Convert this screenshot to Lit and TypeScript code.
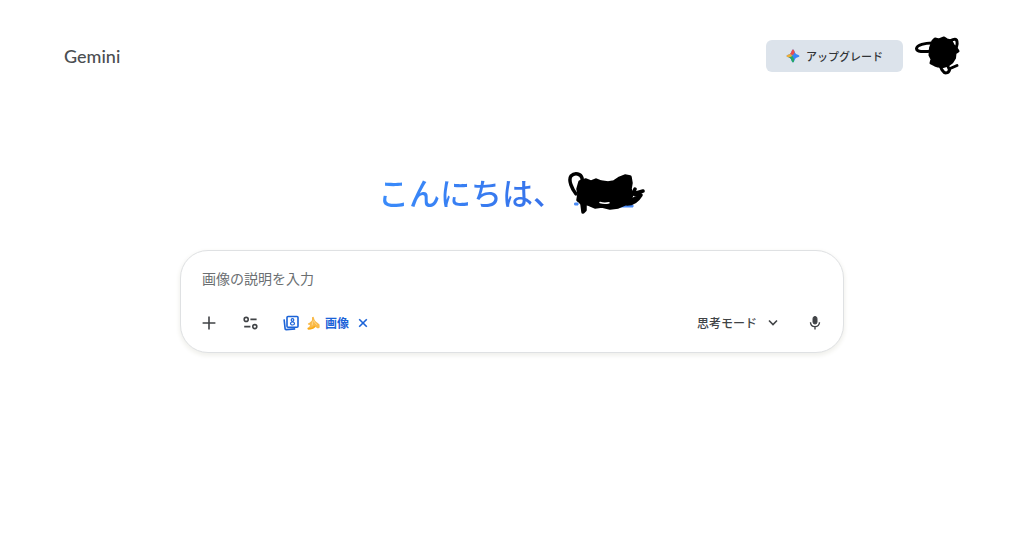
import { LitElement, html, css } from "lit";
import { customElement, state } from "lit/decorators.js";

@customElement("app-header")
class AppHeader extends LitElement {
  static styles = css`
    :host { display: block; }
    header {
      display: flex;
      align-items: center;
      justify-content: space-between;
      padding: 32px 62px 0 64px;
      height: 48px;
    }
    .brand {
      font: 500 18px/24px "Lato", "Open Sans", sans-serif;
      color: #4b4e51;
      text-decoration: none;
    }
    .actions { display: flex; align-items: center; gap: 11px; }
    button { font: inherit; border: 0; cursor: pointer; }
    .upgrade {
      display: flex;
      align-items: center;
      gap: 6px;
      height: 32px;
      padding: 0 20px;
      border-radius: 6px;
      background: #dce3eb;
      color: #303336;
      font-size: 11px;
      font-weight: 500;
      line-height: 16px;
      white-space: nowrap;
    }
    .avatar { display: block; padding: 0; background: none; }
    svg { display: block; }
  `;

  render() {
    return html`
      <header>
        <a class="brand" href="#">Gemini</a>
        <div class="actions">
          <button class="upgrade" type="button">
            <svg width="14" height="14" viewBox="0 0 14 14" aria-hidden="true">
              <defs>
                <clipPath id="spark"><path d="M7 .5C8 .5 8.300 2.500 9.400 4.200 10.500 5.600 13.500 6 13.500 7S10.500 8.400 9.400 9.600C8.300 11.500 8 13.500 7 13.500S5.700 11.500 4.600 9.600C3.500 8.400.5 8 .5 7S3.500 5.600 4.600 4.200C5.700 2.500 6 .5 7 .5Z"/></clipPath>
                <filter id="soft"><feGaussianBlur stdDeviation=".7"/></filter>
              </defs>
              <g clip-path="url(#spark)">
                <rect width="14" height="14" fill="#3b86f5"/>
                <g filter="url(#soft)">
                  <path d="M4-1h5.500l-.5 4-2 3-4-1Z" fill="#ee4d4a"/>
                  <path d="M-1 4l5 .5 2.500 2.500-2 2-5.500 1Z" fill="#f0ae35"/>
                  <path d="M3 8.500l3.500-1.500 1.500 3v5H3Z" fill="#26a865"/>
                </g>
              </g>
            </svg>
            アップグレード
          </button>
          <button class="avatar" type="button" aria-label="アカウント">
            <svg width="48" height="42" viewBox="0 0 48 42" fill="none" stroke="#000" stroke-width="3" stroke-linecap="round" stroke-linejoin="round">
              <path d="M19 6l2-2 4 1 5-2 3 2 4 1 2 4 3 3 2 3-3 2-.5 5-2.500 4-4 3-5 1.500-5-.5-3-1-4-2 1-4-2-4 .5-7Z" fill="#000"/>
              <path d="M18 8C11 8 3 10 2.500 13.500 2.500 17 9 17 18 16M35 7c2-2 6-3.500 7.500-2 1 2 .5 6-1 9M25 30c2 1 1.500 3 3.500 5.500 2 3.500 6 3 7-.5l-1.500-3.500M35 34l8-3.500"/>
            </svg>
          </button>
        </div>
      </header>
    `;
  }
}

@customElement("prompt-box")
class PromptBox extends LitElement {
  @state() imageMode = true;

  static styles = css`
    :host { display: block; }
    form {
      box-sizing: border-box;
      display: flex;
      flex-direction: column;
      gap: 21px;
      padding: 17px 21px 15px;
      border: 1px solid #dfe1e3;
      border-radius: 28px;
      background: #fff;
      box-shadow: 0 2px 4px 1px #f1f1ed;
    }
    input {
      width: 100%;
      height: 20px;
      padding: 0;
      border: 0;
      outline: 0;
      background: none;
      font: inherit;
      font-size: 14px;
      line-height: 20px;
      color: #303336;
    }
    input::placeholder { color: #6b6f72; opacity: 1; }
    .tools { display: flex; align-items: center; height: 28px; color: #404346; }
    button {
      display: flex;
      align-items: center;
      padding: 0;
      border: 0;
      background: none;
      color: inherit;
      font: inherit;
      cursor: pointer;
    }
    svg { display: block; flex: none; }
    .settings { margin-left: 27px; }
    .chip {
      display: flex;
      align-items: center;
      gap: 8px;
      margin-left: 25px;
      color: #1b63d8;
      font-size: 12px;
      font-weight: 700;
      line-height: 20px;
    }
    .label { display: flex; align-items: center; gap: 5px; }
    .mode {
      position: relative;
      display: flex;
      align-items: center;
      margin-left: auto;
    }
    select {
      appearance: none;
      width: 82px;
      padding: 0;
      border: 0;
      outline: 0;
      background: none;
      color: inherit;
      font: inherit;
      font-size: 12px;
      font-weight: 500;
      line-height: 20px;
      cursor: pointer;
    }
    .arrow { position: absolute; right: 0; pointer-events: none; }
    .mic { margin-left: 29px; }
  `;

  render() {
    return html`
      <form @submit=${(e: Event) => e.preventDefault()}>
        <input type="text" aria-label="画像の説明" placeholder="画像の説明を入力" />
        <div class="tools">
          <button type="button" aria-label="追加">
            <svg width="14" height="14" viewBox="0 0 14 14" stroke="currentColor" stroke-width="1.6"><path d="M7 .6v12.800M.6 7h12.800"/></svg>
          </button>
          <button class="settings" type="button" aria-label="ツール">
            <svg width="15" height="14" viewBox="0 0 15 14" fill="none" stroke="currentColor" stroke-width="1.6">
              <circle cx="3.2" cy="3.4" r="2"/><path d="M7.4 3.4h6.200M1.200 10.600h6.200"/><circle cx="11.800" cy="10.600" r="2"/>
            </svg>
          </button>
          ${this.imageMode
            ? html`<div class="chip">
                <svg width="16" height="16" viewBox="0 0 16 16" fill="none" stroke="currentColor" stroke-width="1.6">
                  <rect x="4" y="1.500" width="11" height="10.800" rx="1"/>
                  <path d="M1.100 4.300l1 9.400q.1 1 1.100.9l9-.7"/>
                  <circle cx="9.500" cy="5" r="1.300" stroke-width="1.200"/>
                  <ellipse cx="9.500" cy="8.500" rx="2" ry="1.500" stroke-width="1.200"/>
                </svg>
                <span class="label">
                  <svg width="13" height="14" viewBox="0 0 13 14" aria-hidden="true">
                    <path d="M5 1.200 6.600.7l1 3.300c.8 1.300 2.400 2.300 4.900 4.500l.2 3-1.700.9-2.700-1.400c-1 1.900-3.600 2.500-6.800 2.400-1.200 0-1.500-1-.8-1.600C2 11.300 2.800 10.400 3 9L1 8.600.9 7.500C2.800 6.700 4 5.500 5 4.200Z" fill="#f9ba4a"/>
                    <path d="M6.300 4.400c-.8 1.700-1 3.300-1.200 5M7 4.800c.4 1.500 1.500 2.800 3.200 4" stroke="#ffd98c" stroke-width="1" fill="none"/>
                    <path d="M.9 12.700c3 .3 5.600-.6 7-2.500" stroke="#fbab14" stroke-width="1.400" fill="none"/>
                  </svg>
                  画像
                </span>
                <button type="button" aria-label="画像を解除" @click=${() => (this.imageMode = false)}>
                  <svg width="12" height="12" viewBox="0 0 12 12" stroke="currentColor" stroke-width="1.6"><path d="M2.200 2.200l7.600 7.600M9.800 2.200l-7.600 7.600"/></svg>
                </button>
              </div>`
            : null}
          <div class="mode">
            <select aria-label="モード">
              <option>思考モード</option>
            </select>
            <svg class="arrow" width="12" height="12" viewBox="0 0 12 12" fill="none" stroke="currentColor" stroke-width="1.6"><path d="M2 3.500l4 4 4-4"/></svg>
          </div>
          <button class="mic" type="button" aria-label="マイク">
            <svg width="14" height="14" viewBox="0 0 14 14" fill="none" stroke="currentColor" stroke-width="1.400">
              <rect x="5" y=".5" width="4" height="7.500" rx="2" fill="currentColor" stroke-width="1"/>
              <path d="M2.500 6.200c0 2.800 2 4.400 4.500 4.400s4.500-1.600 4.500-4.400M7 10.600v3"/>
            </svg>
          </button>
        </div>
      </form>
    `;
  }
}

@customElement("app-root")
class AppRoot extends LitElement {
  static styles = css`
    :host {
      display: block;
      min-height: 100vh;
      background: #fff;
      font-family: "Noto Sans CJK JP", sans-serif;
    }
    main {
      max-width: 664px;
      margin: 0 auto;
      padding: 92px 16px 40px;
    }
    h1 {
      display: flex;
      align-items: flex-start;
      justify-content: center;
      gap: 4px;
      margin: 0 0 34px;
      font-size: 31px;
      font-weight: 500;
      line-height: 40px;
    }
    .greeting {
      background: linear-gradient(100deg, #3a8cfb, #366fe8);
      -webkit-background-clip: text;
      background-clip: text;
      color: transparent;
    }
    svg { display: block; }
  `;

  render() {
    return html`
      <app-header></app-header>
      <main>
        <h1>
          <span class="greeting">こんにちは、</span>
          <svg width="78" height="44" viewBox="0 0 78 44" fill="none" stroke="#000" stroke-width="3.500" stroke-linecap="round" stroke-linejoin="round" aria-hidden="true">
            <path d="M7 31h3v2H7ZM26 33h39v2H26Z" fill="#4a8bf5" stroke="#4a8bf5" stroke-width="1"/>
            <path d="M12 10l6-2 5 2 5-2 5 2 7 1 6-1 6-4 5-2 5 1 1 6-1 6 2 5-2 6-5 4-7 3-8 1-8-2-7 1-7-3-5-1-5-3 1-6-1-5Z" fill="#000"/>
            <path d="M8 22C4 17 0 8 3 4c4-4 10-2 11 2 1 4-2 6-2 8M11 28l3 4 1 8 2-2V30M62 22l6-1 7-2M67 17l-2 5 8 1c-3 5-8 9-14 9M55 31l11-4 5-4"/>
            <path d="M32 30.500c3 1 6 1 9 .3" stroke="#fff" stroke-width="1.500"/>
          </svg>
        </h1>
        <prompt-box></prompt-box>
      </main>
    `;
  }
}
